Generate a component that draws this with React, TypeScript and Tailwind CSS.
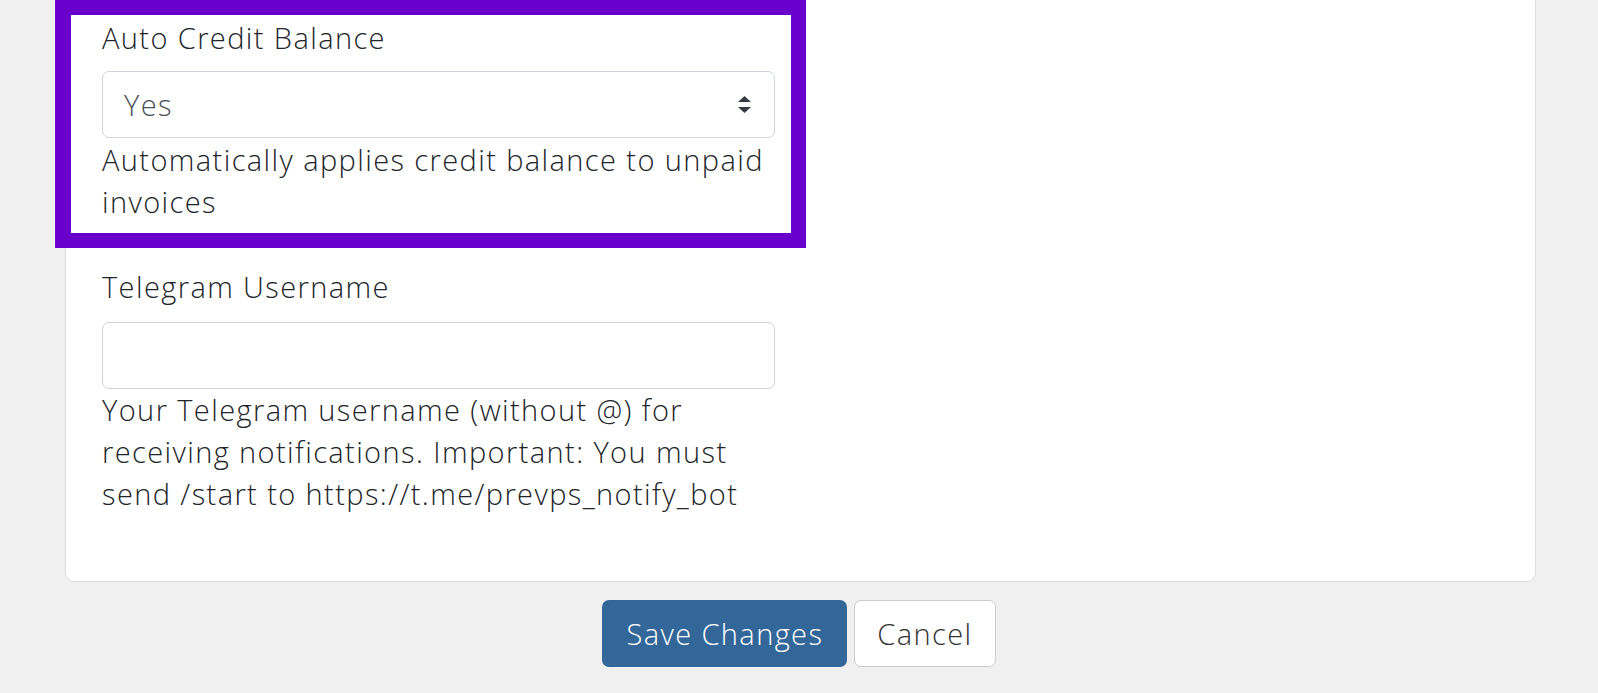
export default function App() {
  return (
    <div
      className="min-h-[693px] bg-[#f0f0f0] text-[#212529] tracking-[1.4px]"
      style={{ fontFamily: '"Open Sans", "Noto Sans", sans-serif' }}
    >
      <div className="ml-[65px] mr-[62px] rounded-b-[9px] border-x border-b border-[#dcdcdc] bg-white pl-[36px] pb-[66px]">
        <div className="w-[673px]">
          <div className="relative pt-[17px]">
            <div className="pointer-events-none absolute left-[-47px] top-0 h-[248px] w-[751px] border-[15px] border-l-[16px] border-[#6a00cc]" />
            <label className="block text-[29px] font-light leading-[42px]">Auto Credit Balance</label>
            <div className="mt-[12px] flex h-[67px] items-center justify-between rounded-[7px] border border-[#ced4da] pl-[21px] pr-[22px] text-[29px] font-light text-[#495057]">
              <span>Yes</span>
              <svg width="15" height="17" viewBox="0 0 15 17" className="text-[#343a40]">
                <path d="M7.5 0 L14 6 L1 6 Z" fill="currentColor" />
                <path d="M1 11 L14 11 L7.5 17 Z" fill="currentColor" />
              </svg>
            </div>
            <p className="mt-[1px] text-[29px] font-light leading-[42px]">
              Automatically applies credit balance to unpaid invoices
            </p>
          </div>
          <div className="mt-[43px]">
            <label className="block text-[29px] font-light leading-[42px]">Telegram Username</label>
            <input
              type="text"
              className="mt-[14px] block h-[67px] w-full rounded-[7px] border border-[#ced4da] bg-white px-[21px] text-[29px] outline-none"
            />
            <p className="mt-0 text-[29px] font-light leading-[42px]">
              Your Telegram username (without @) for receiving notifications. Important: You must
              send /start to https://t.me/prevps_notify_bot
            </p>
          </div>
        </div>
      </div>
      <div className="mt-[18px] flex justify-center gap-[7px]">
        <button className="h-[67px] rounded-[7px] bg-[#346799] px-[24px] text-[29px] font-light text-white">
          Save Changes
        </button>
        <button className="h-[67px] rounded-[7px] border border-[#cccccc] bg-white px-[22px] text-[29px] font-light text-[#333333]">
          Cancel
        </button>
      </div>
    </div>
  );
}
